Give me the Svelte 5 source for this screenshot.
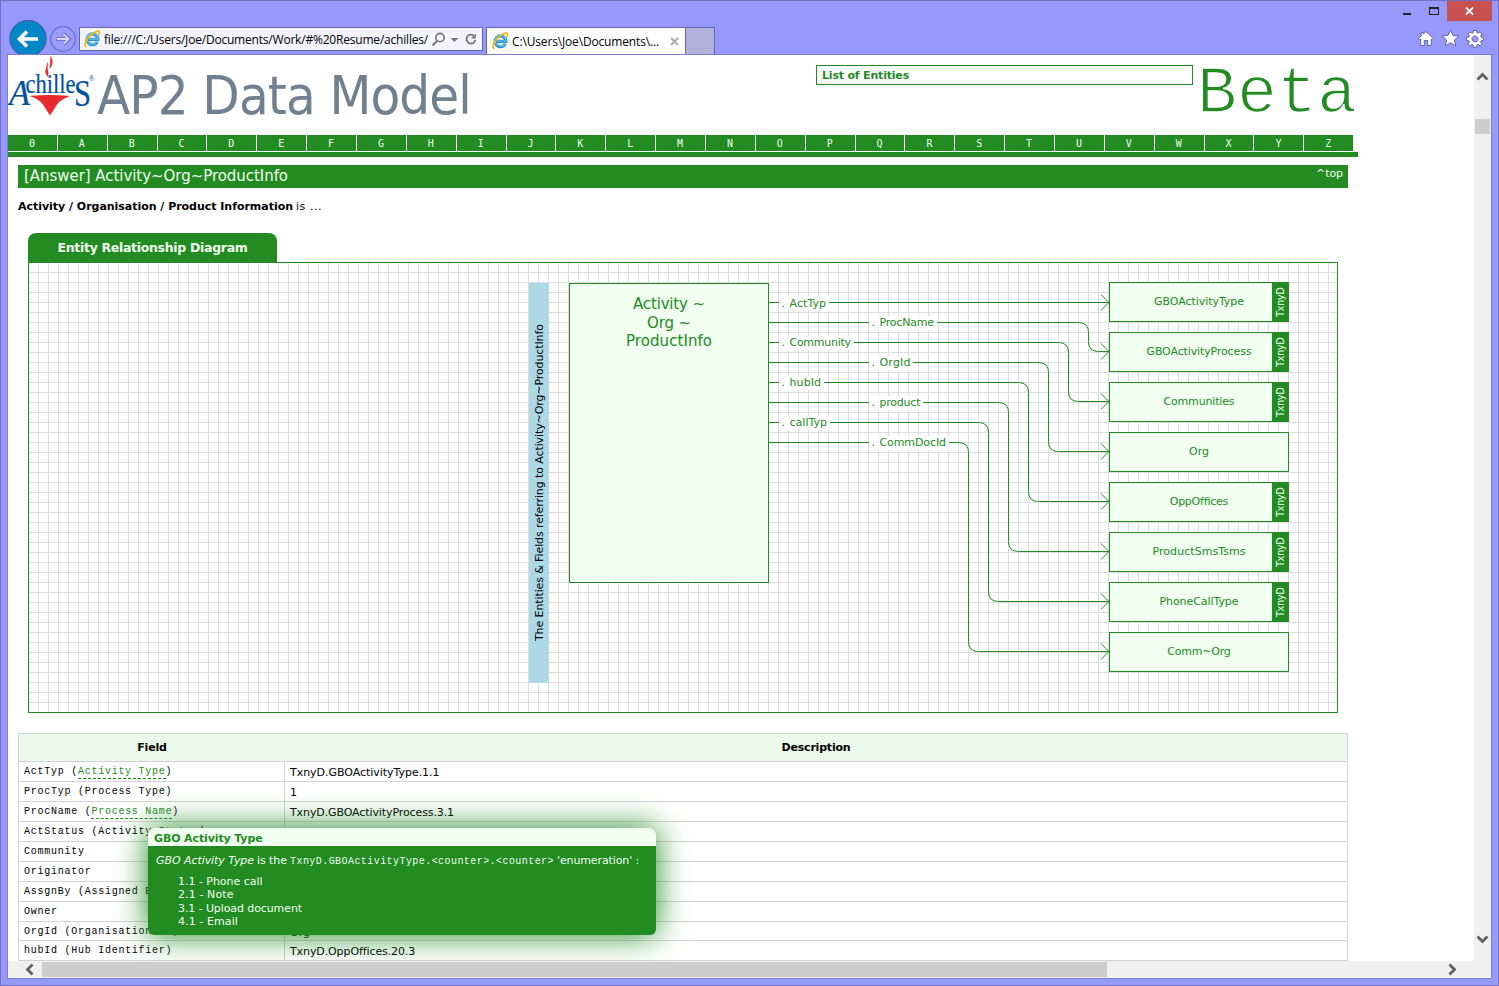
<script>
  const letters = ['0', ...'ABCDEFGHIJKLMNOPQRSTUVWXYZ'];

  const links = [
    { name: 'ActTyp', y: 302.5, x: 779, w: 36.5, gap: 829 },
    { name: 'ProcName', y: 322.5, x: 869, w: 54.5, gap: 937, turn: 1088.5 },
    { name: 'Community', y: 342.5, x: 779, w: 61.5, gap: 854, turn: 1068.5 },
    { name: 'OrgId', y: 362.5, x: 869, w: 31, gap: 913, turn: 1048.5 },
    { name: 'hubId', y: 382.5, x: 779, w: 31.5, gap: 824, turn: 1028.5 },
    { name: 'product', y: 402.5, x: 869, w: 41, gap: 923, turn: 1008.5 },
    { name: 'callTyp', y: 422.5, x: 779, w: 37.5, gap: 830, turn: 988.5 },
    { name: 'CommDocId', y: 442.5, x: 869, w: 66.5, gap: 949, turn: 968.5 }
  ];

  const entities = [
    { name: 'GBOActivityType', w: 90, db: true },
    { name: 'GBOActivityProcess', w: 105, db: true },
    { name: 'Communities', w: 71, db: true },
    { name: 'Org', w: 20 },
    { name: 'OppOffices', w: 58.5, db: true },
    { name: 'ProductSmsTsms', w: 93, db: true },
    { name: 'PhoneCallType', w: 79, db: true },
    { name: 'Comm~Org', w: 63.5 }
  ];

  const rows = [
    { field: 'ActTyp', label: 'Activity Type', link: true, desc: 'TxnyD.GBOActivityType.1.1', w: 149.5 },
    { field: 'ProcTyp', label: 'Process Type', desc: '1', w: 7 },
    { field: 'ProcName', label: 'Process Name', link: true, desc: 'TxnyD.GBOActivityProcess.3.1', w: 164 },
    { field: 'ActStatus', label: 'Activity Status', desc: '' },
    { field: 'Community', desc: '' },
    { field: 'Originator', desc: '' },
    { field: 'AssgnBy', label: 'Assigned By', desc: '' },
    { field: 'Owner', desc: '' },
    { field: 'OrgId', label: 'Organisation Id', desc: 'Org', w: 20 },
    { field: 'hubId', label: 'Hub Identifier', desc: 'TxnyD.OppOffices.20.3', w: 125 }
  ];

  const values = [
    ['1.1 - Phone call', 84.5],
    ['2.1 - Note', 55.5],
    ['3.1 - Upload document', 124],
    ['4.1 - Email', 60]
  ];

  function route(l, i) {
    if (!l.turn) return `M${l.gap} ${l.y}H1109`;
    const end = 301.5 + i * 50;
    const r = 10;
    return `M${l.gap} ${l.y}H${l.turn - r}Q${l.turn} ${l.y} ${l.turn} ${l.y + r}V${end - r}Q${l.turn} ${end} ${l.turn + r} ${end}H1109`;
  }

  // Spreads the letters of a run so that it takes the given width.
  function fit(node, width) {
    if (!width) return;
    node.style.letterSpacing = '0px';
    const natural = node.getBoundingClientRect().width;
    node.style.letterSpacing = `${(width - natural) / node.textContent.length}px`;
  }
</script>

{#snippet ie()}
  <svg class="ie" width="18" height="18" viewBox="0 0 18 18">
    <path d="M14.300 11.800A5.400 5.400 0 1 1 14.900 9.300H5.200" fill="none" stroke="#2b8fd0" stroke-width="3.200" />
    <path d="M14 11.800A5.400 5.400 0 1 1 14.900 9.200H5.400" fill="none" stroke="#62c5f0" stroke-width="1.300" />
    <path d="M3.600 16.600C.2 15.600 2.800 9.500 7.600 5.200 11 2 15.400.2 16.300 1.800c.5 1-.1 2.500-.8 3.600" fill="none" stroke="#f2b90c" stroke-width="1.700" />
  </svg>
{/snippet}

<div class="window">
  <header class="chrome">
    <div class="caption">
      <svg width="44" height="20" viewBox="1403 1 44 20">
        <path d="M1403 13h8v2h-8z" fill="#222" />
        <path d="M1429 7h10v8h-10zm1 2v5h8V9z" fill="#222" fill-rule="evenodd" />
      </svg>
      <div class="close">
        <svg width="9" height="8" viewBox="0 0 9 8"><path d="M1 .5l7 7M8 .5l-7 7" stroke="#fff" stroke-width="1.800" /></svg>
      </div>
    </div>
    <div class="tools">
      <svg class="nav" width="70" height="34" viewBox="9 20 70 34">
        <circle cx="28" cy="38.500" r="18.200" fill="#0086c6" stroke="#5553a4" />
        <path d="M38 39H20M27 31.500L19.500 39l7.500 7.500" fill="none" stroke="#fff" stroke-width="3.600" />
        <circle cx="63" cy="39" r="12.300" fill="#9a9cfb" stroke="#6c6cc0" stroke-width="1.200" />
        <path d="M56.500 39H68M63.500 33.500l5.500 5.500-5.500 5.500" fill="none" stroke="#6c6cc8" stroke-width="3.600" />
        <path d="M57 39H68M63.500 34l5 5-5 5" fill="none" stroke="#d6d6fb" stroke-width="2" />
      </svg>
      <div class="address">
        {@render ie()}
        <span class="url" use:fit={324}>file:///C:/Users/Joe/Documents/Work/#%20Resume/achilles/</span>
        <svg width="50" height="20" viewBox="431 29 50 20">
          <circle cx="440" cy="37.500" r="4.200" fill="none" stroke="#777" stroke-width="1.700" />
          <path d="M437 41l-4.500 4.500" stroke="#777" stroke-width="2.200" />
          <path d="M450.500 38h8l-4 4z" fill="#777" />
          <path d="M474.500 36.200A4.500 4.500 0 1 0 475.400 40" fill="none" stroke="#777" stroke-width="1.800" />
          <path d="M475.800 33.500v5h-5z" fill="#777" />
        </svg>
      </div>
      <div class="tab">
        {@render ie()}
        <span class="url" use:fit={147}>C:\Users\Joe\Documents\...</span>
        <svg width="9" height="9" viewBox="0 0 9 9"><path d="M1 1l7 7M8 1l-7 7" stroke="#aaa" stroke-width="2" /></svg>
      </div>
      <div class="newtab"></div>
      <svg class="commands" width="68" height="20" viewBox="1417 28 68 20">
        <g fill="#fff" stroke="#6161ad" stroke-width="1" stroke-linejoin="round">
          <path d="M1426 31.500l7.500 7-1.300 1.300-.9-.8v6.500h-3.600v-5h-3.400v5h-3.600V39l-.9.800-1.300-1.300 2.700-2.600v-3.400h2v1.600z" />
          <path d="M1450.500 30l2.500 5.500 5.900.5-4.500 4 1.400 6-5.300-3.200-5.300 3.200 1.400-6-4.500-4 5.900-.5z" />
          <path fill-rule="evenodd" d="M1473.500 30.500h3l.4 2.300 1.200.5 1.900-1.400 2 2-1.400 1.900.5 1.200 2.300.4v3l-2.300.4-.5 1.200 1.400 1.900-2 2-1.900-1.400-1.200.5-.4 2.300h-3l-.4-2.300-1.200-.5-1.900 1.400-2-2 1.400-1.900-.5-1.200-2.300-.4v-3l2.300-.4.5-1.200-1.400-1.900 2-2 1.900 1.400 1.200-.5zM1475 35.900a3 3 0 1 0 .01 0z" />
        </g>
      </svg>
    </div>
  </header>

  <div class="view">
    <main class="page">
      <div class="banner">
        <svg class="logo" width="89" height="63" viewBox="8 55 89 63">
          <g font-family="Liberation Serif, serif" fill="#00509f" stroke="#00509f" stroke-width=".2">
            <text x="9" y="104.500" font-size="36" font-style="italic" textLength="21" lengthAdjust="spacingAndGlyphs">A</text>
            <text x="25.500" y="92.500" font-size="27" textLength="50" lengthAdjust="spacingAndGlyphs">chille</text>
            <text x="74" y="106" font-size="38" textLength="17" lengthAdjust="spacingAndGlyphs">S</text>
            <text x="88.500" y="81" font-size="8" stroke="none">®</text>
          </g>
          <path d="M29 96q20.500-2 41 0-9 3-13 8.500l-7 11-7-11q-5-6.500-14-8.500z" fill="#e92a2c" />
          <path d="M50.500 56.500q4 5.500-.5 12 0-3 .3-6.500.5-2.500.2-5.500zM47.500 62.500q-.5 5 .2 7 1 3 0 7-3.500-4-1.500-8z" fill="#e92a2c" stroke="#e92a2c" stroke-width=".5" />
        </svg>
        <h1 use:fit={374}>AP2 Data Model</h1>
        <div class="list"><b use:fit={87}>List of Entities</b></div>
        <div class="beta">Beta</div>
      </div>

      <nav class="letters">
        {#each letters as l}<span>{l}</span>{/each}
      </nav>
      <div class="rule"></div>

      <div class="title">
        <span use:fit={264}>[Answer] Activity~Org~ProductInfo</span>
        <a href="#top" use:fit={27}>^top</a>
      </div>
      <p class="intro"><b use:fit={275}>Activity / Organisation / Product Information</b><span use:fit={26}>is ...</span></p>

      <section class="erd">
        <h2><span use:fit={190}>Entity Relationship Diagram</span></h2>
        <div class="canvas">
          <svg width="1308" height="449" viewBox="29 263 1308 449">
            <rect x="529" y="283" width="20" height="400" fill="#add8e6" />
            <text transform="translate(543 641) rotate(-90)" textLength="317" class="black">The Entities &amp; Fields referring to Activity~Org~ProductInfo</text>
            <rect class="box" x="569.5" y="283.5" width="199" height="299" />
            <g class="big">
              <text x="633" y="309" textLength="72">Activity ~</text>
              <text x="647" y="328" textLength="44">Org ~</text>
              <text x="626" y="346" textLength="86">ProductInfo</text>
            </g>
            {#each links as l, i}
              <rect x={l.x} y={l.y - 6.5} width={l.gap - l.x} height="14" fill="#fff" />
              <path class="line" d={`M769 ${l.y}H${l.x}`} />
              <path class="line" d={route(l, i)} />
              <path class="arrow" d={`M1101 ${(i ? 293.5 : 294.5) + i * 50}l8 8-8 8`} />
              <text x={l.x + 2.5} y={l.y + (i ? 3.5 : 4.5)}>.</text>
              <text x={l.x + 10.5} y={l.y + (i ? 3.5 : 4.5)} textLength={l.w}>{l.name}</text>
            {/each}
            {#each entities as e, i}
              <rect class="box" x="1109.5" y={282.5 + i * 50} width="179" height="39" />
              <text x={1199 - e.w / 2} y={305 + i * 50} textLength={e.w}>{e.name}</text>
              {#if e.db}
                <rect x="1272" y={282 + i * 50} width="17" height="40" fill="#228b22" />
                <text class="flag" transform={`translate(1284 ${317 + i * 50}) rotate(-90)`} textLength="30">TxnyD</text>
              {/if}
            {/each}
          </svg>
        </div>
      </section>

      <div class="table">
        <div class="row head"><b use:fit={29.5}>Field</b><b use:fit={69}>Description</b></div>
        {#each rows as r}
          <div class="row">
            <code>{r.field}{#if r.label}{' ('}{#if r.link}<a href="#term">{r.label}</a>{:else}{r.label}{/if}{')'}{/if}</code>
            <div class="desc"><span use:fit={r.w}>{r.desc}</span></div>
          </div>
        {/each}
      </div>

      <aside class="tip">
        <div class="tiphead"><b use:fit={108.5}>GBO Activity Type</b></div>
        <div class="tipbody">
          <p><em use:fit={98}>GBO Activity Type</em><span use:fit={30}>is the</span><code use:fit={264}>TxnyD.GBOActivityType.&lt;counter&gt;.&lt;counter&gt;</code><span use:fit={82}>'enumeration' :</span></p>
          <ul>
            {#each values as [v, w]}<li><span use:fit={w}>{v}</span></li>{/each}
          </ul>
        </div>
      </aside>
    </main>

    <div class="vbar">
      <svg width="17" height="906" viewBox="1474 55 17 906">
        <rect x="1475" y="119" width="15" height="15" fill="#cdcdcd" />
        <path d="M1477.500 79.500l5-5 5 5M1477.500 936.500l5 5 5-5" fill="none" stroke="#606060" stroke-width="2.800" />
      </svg>
    </div>
    <div class="hbar">
      <svg width="1483" height="17" viewBox="8 961 1483 17">
        <rect x="42" y="962" width="1065" height="15" fill="#cdcdcd" />
        <path d="M32.500 964.500l-5 5 5 5M1449.500 964.500l5 5-5 5" fill="none" stroke="#606060" stroke-width="2.800" />
      </svg>
    </div>
  </div>
</div>

<style>
  :global(body) { margin: 0; overflow: hidden; }
  .window {
    box-sizing: border-box;
    width: 1499px;
    height: 986px;
    display: flex;
    flex-direction: column;
    background: #9698fb;
    border: 1px solid #7070bf;
    font: 11px/13px "DejaVu Sans", sans-serif;
    color: #000;
  }
  svg { display: block; flex: none; }
  span, b, em, a, code { white-space: nowrap; }
  h1, h2, p, ul { margin: 0; padding: 0; font-weight: normal; }
  .chrome { height: 53px; flex: none; }
  .caption { display: flex; justify-content: flex-end; height: 20px; padding-right: 6px; }
  .close { width: 45px; background: #c75050; display: flex; align-items: center; justify-content: center; }
  .tools { display: flex; height: 33px; align-items: flex-start; padding: 0 13px 0 8px; }
  .nav { margin-top: -1px; }
  .address, .tab, .newtab { box-sizing: border-box; margin-top: 6px; display: flex; align-items: center; border: 1px solid #6565b4; }
  .address { width: 404px; height: 24px; background: #f4f4ff; padding-left: 3px; }
  .address .url { margin: 1px 3px 0 3px; }
  .tab { width: 200px; height: 27px; background: #fff; border-bottom: 0; margin-left: 3px; padding-left: 4px; }
  .tab .url { margin: 1px 11px 0 3px; }
  .newtab { width: 29px; height: 27px; background: #b1b1dc; border-bottom: 0; border-left: 0; }
  .url { font: 12px/16px "Open Sans", sans-serif; }
  .commands { margin: 7px 0 0 auto; }
  .view {
    width: 1483px;
    height: 923px;
    margin-left: 6px;
    display: grid;
    grid-template: 906px 17px / 1466px 17px;
    border: 1px solid #7c7cd0;
    background: #fff;
  }
  .page { position: relative; overflow: hidden; background: #fff; }
  .vbar, .hbar { background: #f0f0f0; }
  .hbar { grid-column: 1 / 3; }
  .banner { display: flex; height: 80px; }
  h1 { margin-right: 345px; font: 54px/82px "DejaVu Sans Condensed", "DejaVu Sans", sans-serif; color: #708090; }
  .list { box-sizing: border-box; width: 377px; height: 20px; margin-top: 10px; padding: 3px 5px; border: 1px solid #228b22; color: #228b22; line-height: 13px; }
  b, em, span, h1 { display: inline-block; }
  .beta { margin-left: 4px; font: 66.600px/80px "Liberation Mono", monospace; color: #228b22; -webkit-text-stroke: 1.500px #fff; }
  .letters { display: flex; gap: 1px; width: 1345px; height: 16px; }
  .letters span { flex: 1; padding-right: 1px; background: #228b22; color: #f0fff0; text-align: center; font: 10px/17px "DejaVu Sans Mono", monospace; }
  .rule { width: 1350px; height: 5px; margin-top: 1px; background: #228b22; }
  .title { box-sizing: border-box; display: flex; justify-content: space-between; width: 1330px; height: 23px; margin: 8px 0 0 10px; padding: 0 5px 0 6px; background: #228b22; color: #f0fff0; font-size: 15px; line-height: 23px; }
  .title a { color: #f0fff0; text-decoration: none; font-size: 11px; line-height: 17px; }
  .intro { display: flex; gap: 3px; margin: 12px 0 0 10px; }
  .erd { width: 1310px; margin: 20px 0 0 20px; }
  h2 { width: 249px; height: 29px; border-radius: 8px 8px 0 0; background: #228b22; color: #f0fff0; text-align: center; font-size: 12.500px; font-weight: bold; line-height: 29px; }
  .canvas {
    border: 1px solid #228b22;
    background-image:
      linear-gradient(to right, transparent 9px, #ddd 9px),
      linear-gradient(to bottom, transparent 9px, #ddd 9px);
    background-size: 10px 10px;
  }
  .canvas text { fill: #228b22; font-size: 11px; }
  .canvas .big text { font-size: 15px; }
  .canvas .black { fill: #000; }
  .canvas .flag { fill: #f0fff0; font-size: 10px; }
  .box { fill: #f0fff0; stroke: #228b22; }
  .line, .arrow { fill: none; stroke: #228b22; }
  .table { box-sizing: border-box; width: 1330px; margin: 20px 0 0 10px; border: 1px solid #d3d3d3; border-bottom: 0; }
  .row { display: grid; grid-template-columns: 266px 1fr; height: 19px; border-bottom: 1px solid #d3d3d3; }
  .row:nth-child(10) { height: 18px; }
  .head { height: 27px; background: #ebf9eb; justify-items: center; line-height: 27px; }
  .row code { box-sizing: border-box; padding-left: 5px; border-right: 1px solid #d3d3d3; font: 10px/20px "Liberation Mono", monospace; letter-spacing: .74px; }
  .row a { color: #228b22; text-decoration: none; border-bottom: 1px dashed #228b22; padding-bottom: 1px; }
  .desc { padding-left: 5px; line-height: 21px; }
  .tip { position: absolute; left: 140px; top: 773px; width: 508px; height: 107px; border-radius: 6px; overflow: hidden; background: #228b22; color: #f0fff0; box-shadow: 0 0 33px #228b22; }
  .tiphead { height: 18px; padding-left: 6px; background: #f0fff0; color: #228b22; line-height: 21px; }
  .tipbody { padding: 8px; }
  .tipbody p { display: flex; align-items: baseline; gap: 3px; }
  .tipbody code { font: 10px/13px "Liberation Mono", monospace; }
  ul { list-style: none; margin: 7px 0 0 22px; }
  li { height: 13.400px; }
  li span { line-height: 13px; }
</style>
